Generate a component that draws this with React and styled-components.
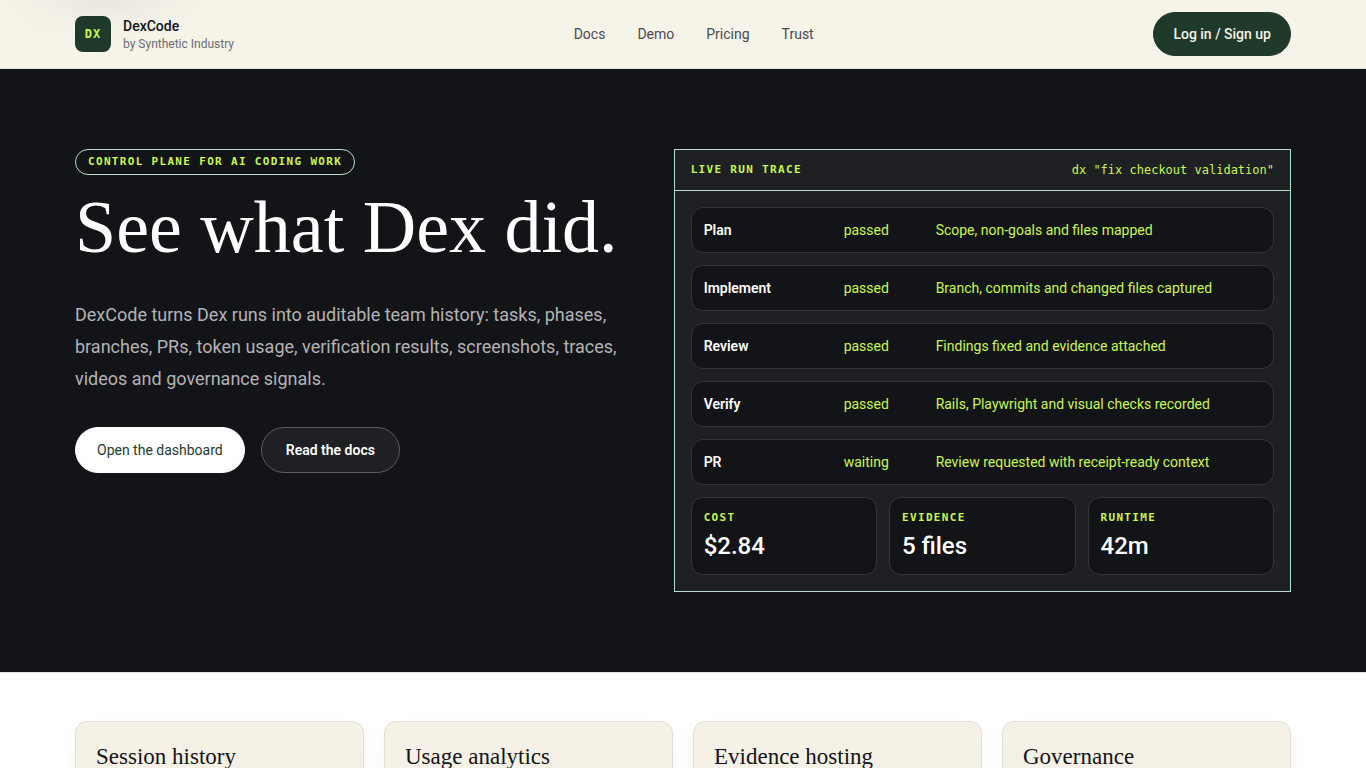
import React from "react";
import styled, { createGlobalStyle } from "styled-components";

const sans = `Roboto, "Liberation Sans", sans-serif`;
const serif = `"Liberation Serif", serif`;
const mono = `"DejaVu Sans Mono", "Liberation Mono", monospace`;

const lime = "#c8f751";
const ink = "#131418";
const slate = "#1f2024";
const forest = "#1f3a2b";
const cream = "#f6f3e8";
const mint = "#b9dccb";

const GlobalStyle = createGlobalStyle`
  *, *::before, *::after { box-sizing: border-box; }
  body {
    margin: 0;
    background: #fff;
    color: ${ink};
    font-family: ${sans};
    font-size: 14px;
    line-height: 20px;
  }
  h1, h2, p, ul, dl, dd { margin: 0; padding: 0; }
  a { color: inherit; text-decoration: none; }
`;

const Container = styled.div`
  width: 100%;
  max-width: 1280px;
  margin: 0 auto;
  padding: 0 32px;
`;

const Header = styled.header`
  border-bottom: 1px solid #e2dfd6;
  background:
    radial-gradient(ellipse 130px 52px at 104px -8px, rgba(90, 80, 130, 0.09), rgba(90, 80, 130, 0.02) 60%, transparent),
    ${cream};
`;

const HeaderBar = styled(Container)`
  display: flex;
  align-items: center;
  justify-content: space-between;
  padding-top: 12px;
  padding-bottom: 12px;
`;

const Brand = styled.a`
  display: flex;
  align-items: center;
  gap: 12px;
`;

const BrandMark = styled.span`
  display: grid;
  place-items: center;
  width: 36px;
  height: 36px;
  border-radius: 8px;
  background: ${forest};
  color: ${lime};
  font: 700 12px/16px ${mono};
  letter-spacing: 1px;
`;

const BrandText = styled.span`
  display: flex;
  flex-direction: column;
`;

const BrandName = styled.span`
  font-weight: 500;
  line-height: 20px;
`;

const BrandOwner = styled.span`
  color: #6c6d73;
  font-size: 12px;
  line-height: 16px;
`;

const Nav = styled.nav`
  display: flex;
  gap: 32px;
  color: #4a4b50;
`;

const Button = styled.button`
  height: ${({ $tall }) => ($tall ? 46 : 44)}px;
  padding: 0 ${({ $pad }) => $pad}px;
  border: 1px solid ${({ $border, $bg }) => $border || $bg};
  border-radius: 24px;
  background: ${({ $bg }) => $bg};
  color: ${({ $color }) => $color};
  font: ${({ $weight }) => $weight || 500} 14px/20px ${sans};
  cursor: pointer;
`;

const Hero = styled.section`
  background: ${ink};
  color: #fff;
`;

const HeroGrid = styled(Container)`
  display: grid;
  grid-template-columns: 33fr 37fr;
  gap: 48px;
  padding-top: 80px;
  padding-bottom: 80px;
`;

const Label = styled.span`
  color: ${lime};
  font: 700 11px/16px ${mono};
  letter-spacing: 0.12em;
  text-transform: uppercase;
`;

const Intro = styled.div`
  display: flex;
  flex-direction: column;
  align-items: flex-start;
`;

const Eyebrow = styled(Label)`
  padding: 4px 12px;
  border: 1px solid ${mint};
  border-radius: 13px;
`;

const Title = styled.h1`
  margin-top: 16px;
  font: 400 74px/72px ${serif};
  white-space: nowrap;
`;

const Lead = styled.p`
  margin-top: 36px;
  color: #b3b3b5;
  font-size: 18px;
  line-height: 32px;
`;

const Actions = styled.div`
  display: flex;
  gap: 16px;
  margin-top: 32px;
`;

const Panel = styled.section`
  border: 1px solid ${mint};
  background: ${slate};
`;

const PanelHead = styled.header`
  display: flex;
  align-items: center;
  justify-content: space-between;
  padding: 12px 16px;
  border-bottom: 1px solid ${mint};
`;

const Command = styled.code`
  color: ${lime};
  font: 400 12px/16px ${mono};
`;

const PanelBody = styled.div`
  display: grid;
  gap: 12px;
  padding: 16px;
`;

const Steps = styled.ul`
  display: grid;
  gap: 12px;
  list-style: none;
`;

const Step = styled.li`
  display: grid;
  grid-template-columns: 128px 80px 1fr;
  gap: 12px;
  padding: 12px;
  border: 1px solid #34353a;
  border-radius: 12px;
  background: ${ink};
  color: ${lime};
`;

const StepName = styled.strong`
  color: #fff;
  font-weight: 600;
`;

const Stats = styled.dl`
  display: grid;
  grid-template-columns: repeat(3, 1fr);
  gap: 12px;
`;

const Stat = styled.div`
  display: grid;
  gap: 4px;
  padding: 12px;
  border: 1px solid #34353a;
  border-radius: 12px;
  background: ${ink};
`;

const StatValue = styled.dd`
  font-size: 24px;
  font-weight: 500;
  line-height: 32px;
`;

const Features = styled.section`
  border-top: 1px solid #e2dfd6;
  background: #fff;
`;

const FeatureGrid = styled(Container)`
  display: grid;
  grid-template-columns: repeat(4, 1fr);
  gap: 20px;
  padding-top: 48px;
  padding-bottom: 48px;
`;

const Card = styled.article`
  min-height: 160px;
  padding: 20px;
  border: 1px solid #e2dfd6;
  border-radius: 12px;
  background: #f5f1e6;
  box-shadow: 0 8px 20px rgba(19, 20, 24, 0.04);
`;

const CardTitle = styled.h2`
  font: 400 23px/30px ${serif};
`;

const links = ["Docs", "Demo", "Pricing", "Trust"];

const steps = [
  ["Plan", "passed", "Scope, non-goals and files mapped"],
  ["Implement", "passed", "Branch, commits and changed files captured"],
  ["Review", "passed", "Findings fixed and evidence attached"],
  ["Verify", "passed", "Rails, Playwright and visual checks recorded"],
  ["PR", "waiting", "Review requested with receipt-ready context"],
];

const stats = [
  ["Cost", "$2.84"],
  ["Evidence", "5 files"],
  ["Runtime", "42m"],
];

const features = ["Session history", "Usage analytics", "Evidence hosting", "Governance"];

export default function App() {
  return (
    <>
      <GlobalStyle />
      <Header>
        <HeaderBar>
          <Brand href="#">
            <BrandMark>DX</BrandMark>
            <BrandText>
              <BrandName>DexCode</BrandName>
              <BrandOwner>by Synthetic Industry</BrandOwner>
            </BrandText>
          </Brand>
          <Nav>
            {links.map((name) => (
              <a key={name} href={`#${name.toLowerCase()}`}>{name}</a>
            ))}
          </Nav>
          <Button $pad={19} $bg={forest} $color="#f6f3e8">Log in / Sign up</Button>
        </HeaderBar>
      </Header>
      <main>
        <Hero>
          <HeroGrid>
            <Intro>
              <Eyebrow>Control plane for AI coding work</Eyebrow>
              <Title>See what Dex did.</Title>
              <Lead>
                DexCode turns Dex runs into auditable team history: tasks, phases, branches, PRs,
                token usage, verification results, screenshots, traces, videos and governance
                signals.
              </Lead>
              <Actions>
                <Button $tall $pad={21} $bg="#ffffff" $color={forest} $weight={400}>Open the dashboard</Button>
                <Button $tall $pad={24} $bg={slate} $border="#5c5d61" $color="#ffffff" $weight={600}>Read the docs</Button>
              </Actions>
            </Intro>
            <Panel>
              <PanelHead>
                <Label>Live run trace</Label>
                <Command>dx "fix checkout validation"</Command>
              </PanelHead>
              <PanelBody>
                <Steps>
                  {steps.map(([name, status, detail]) => (
                    <Step key={name}>
                      <StepName>{name}</StepName>
                      <span>{status}</span>
                      <span>{detail}</span>
                    </Step>
                  ))}
                </Steps>
                <Stats>
                  {stats.map(([name, value]) => (
                    <Stat key={name}>
                      <Label as="dt">{name}</Label>
                      <StatValue>{value}</StatValue>
                    </Stat>
                  ))}
                </Stats>
              </PanelBody>
            </Panel>
          </HeroGrid>
        </Hero>
        <Features>
          <FeatureGrid>
            {features.map((name) => (
              <Card key={name}>
                <CardTitle>{name}</CardTitle>
              </Card>
            ))}
          </FeatureGrid>
        </Features>
      </main>
    </>
  );
}
